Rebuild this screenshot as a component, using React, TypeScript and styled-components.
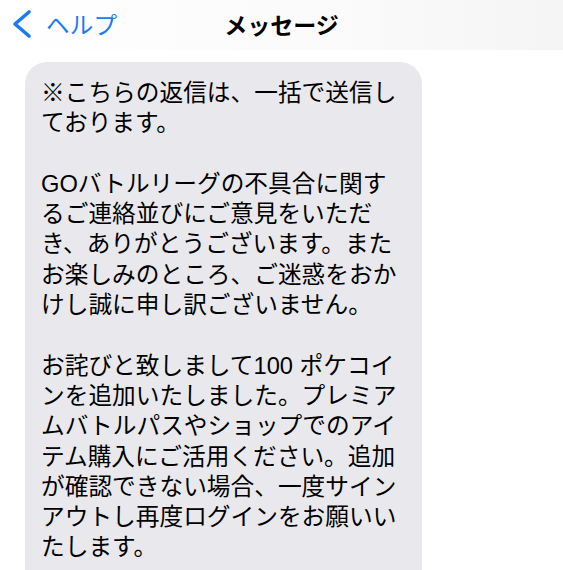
import styled, { createGlobalStyle } from 'styled-components'

const GlobalStyle = createGlobalStyle`
  html, body {
    margin: 0;
    padding: 0;
    background: #ffffff;
  }
  body {
    font-family: "Noto Sans CJK JP", "Noto Sans", sans-serif;
    -webkit-font-smoothing: antialiased;
  }
`

const Screen = styled.div`
  width: 563px;
  height: 570px;
  overflow: hidden;
  background: #ffffff;
`

const NavBar = styled.header`
  height: 50px;
  display: grid;
  grid-template-columns: 1fr auto 1fr;
  align-items: center;
  background: linear-gradient(to right, #ffffff 0%, #fbfbfb 55%, #f5f5f5 100%);
`

const BackButton = styled.button`
  justify-self: start;
  display: flex;
  align-items: center;
  gap: 14px;
  margin: 0 0 3px 12px;
  padding: 0;
  border: none;
  background: none;
  color: #1a7cf3;
  font-family: inherit;
  font-size: 23.5px;
  letter-spacing: 0.3px;
  cursor: pointer;
`

const Title = styled.h1`
  margin: 0 0 3px 0;
  font-size: 23px;
  font-weight: 700;
  color: #000000;
`

const Thread = styled.main`
  padding: 12px 0 0 25px;
`

// Latin metrics keep the line boxes tight; Japanese falls through to Noto CJK
const Bubble = styled.div`
  width: 397px;
  box-sizing: border-box;
  padding: 16px 16px 40px 16px;
  border-radius: 22px;
  background: #e9e9ed;
  color: #000000;
  font-family: "Liberation Sans", "Noto Sans CJK JP", sans-serif;
  font-size: 23.7px;
  line-height: 30.3px;
  white-space: nowrap;
`

const Paragraph = styled.p`
  margin: 0 0 30.3px 0;
`

const Line = styled.span`
  display: block;
`

const Chevron = () => (
  <svg width="20" height="30" viewBox="0 0 20 30" fill="none">
    <polyline
      points="17,3 3,15 17,27"
      stroke="currentColor"
      strokeWidth="3.6"
      strokeLinecap="round"
      strokeLinejoin="round"
    />
  </svg>
)

const paragraphs = [
  ['※こちらの返信は、一括で送信し', 'ております。'],
  [
    'GOバトルリーグの不具合に関す',
    'るご連絡並びにご意見をいただ',
    'き、ありがとうございます。また',
    'お楽しみのところ、ご迷惑をおか',
    'けし誠に申し訳ございません。',
  ],
  [
    'お詫びと致しまして100 ポケコイ',
    'ンを追加いたしました。プレミア',
    'ムバトルパスやショップでのアイ',
    'テム購入にご活用ください。追加',
    'が確認できない場合、一度サイン',
    'アウトし再度ログインをお願いい',
    'たします。',
  ],
]

const App = () => {
  return (
    <>
      <GlobalStyle />
      <Screen>
        <NavBar>
          <BackButton>
            <Chevron />
            ヘルプ
          </BackButton>
          <Title>メッセージ</Title>
          <div />
        </NavBar>
        <Thread>
          <Bubble>
            {paragraphs.map((lines, i) => (
              <Paragraph key={i}>
                {lines.map((line) => (
                  <Line key={line}>{line}</Line>
                ))}
              </Paragraph>
            ))}
          </Bubble>
        </Thread>
      </Screen>
    </>
  )
}

export default App
